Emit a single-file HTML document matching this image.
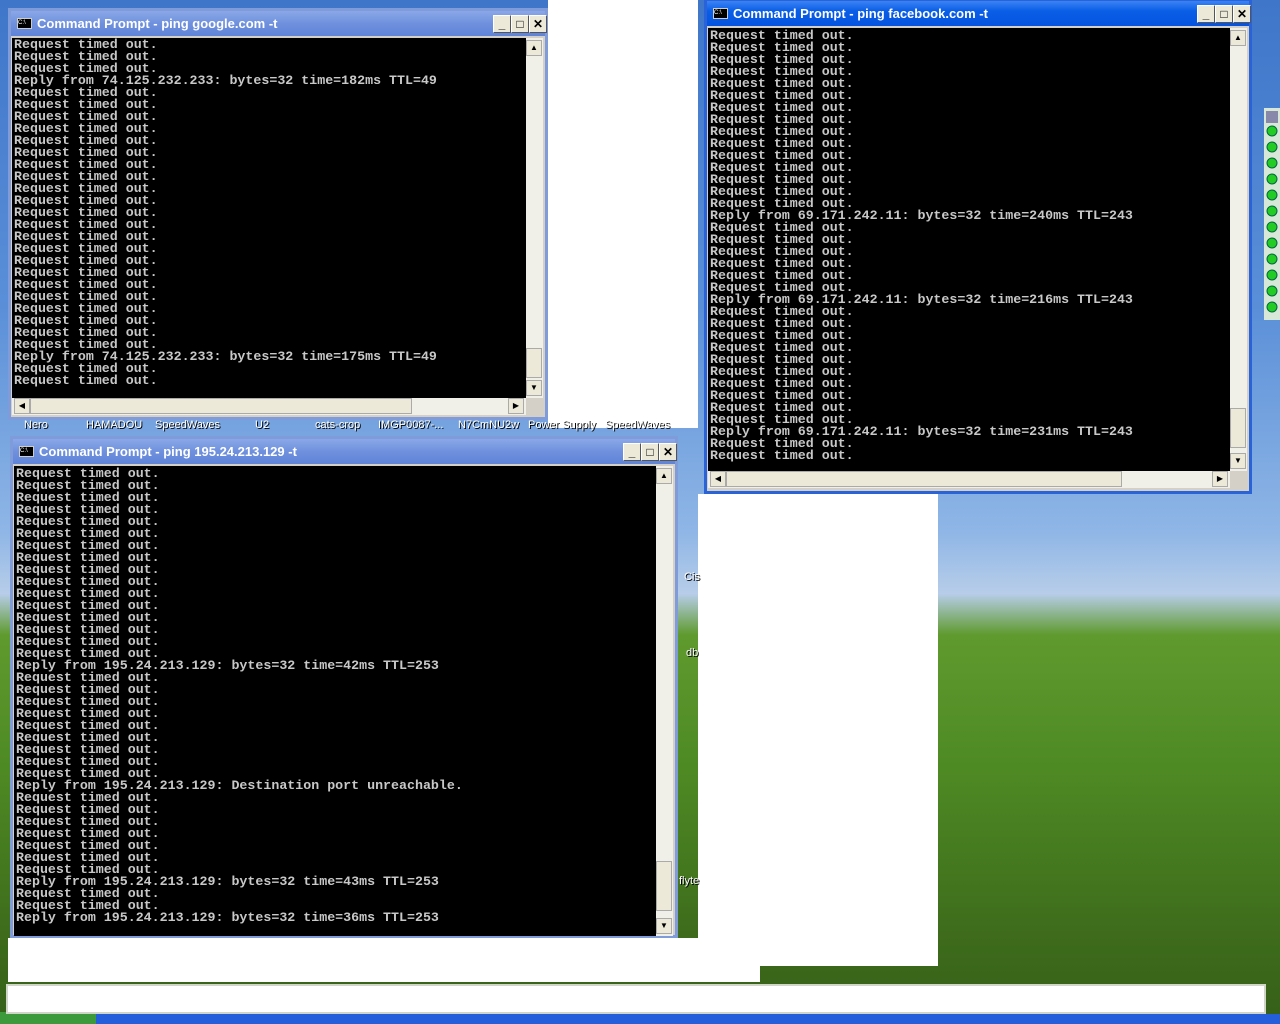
<!DOCTYPE html>
<html><head><meta charset="utf-8"><style>
*{margin:0;padding:0;box-sizing:border-box}
body{width:1280px;height:1024px;overflow:hidden;position:relative;font-family:"Liberation Sans",sans-serif;
background:linear-gradient(180deg,#3f76c9 0%,#5a8fd8 30%,#8fb6e6 52%,#b7cde9 58%,#5f9a2e 62%,#4e8a24 75%,#3f6e1c 90%,#355f18 100%)}
.abs{position:absolute}
.win{position:absolute;background:#d4d0c8;border:3px solid #7f9bd9}
.win.act{border-color:#2a63d8}
.tb{position:absolute;left:0;right:0;top:0;height:25px;background:linear-gradient(180deg,#8aa8e8,#6f90dd 50%,#5f84d8);color:#fff;font-size:13px;font-weight:bold;line-height:25px;padding-left:26px;white-space:nowrap}
.act .tb{background:linear-gradient(180deg,#3b83f5,#0a5ee6 40%,#0553e0)}
.ic{position:absolute;left:6px;top:7px;width:15px;height:11px;background:#000;border:1px solid #ccc;color:#fff;font-size:6px;line-height:9px;font-weight:normal}
.bt{position:absolute;top:4px;width:18px;height:18px;background:#ece9d8;border:1px solid #fff;border-right-color:#555;border-bottom-color:#555;color:#000;font-size:12px;line-height:16px;text-align:center}
.con{position:absolute;background:#000;overflow:hidden}
pre{font-family:"Liberation Mono",monospace;font-size:13.3px;line-height:12px;color:#c8c8c8;font-weight:bold;padding:0 0 0 2px;letter-spacing:0}
.vs{position:absolute;background:#f0efe8;width:17px}
.hs{position:absolute;background:#f0efe8;height:17px}
.ar{position:absolute;width:16px;height:16px;background:#ece9d8;border:1px solid #aaa;font-size:8px;text-align:center;line-height:14px}
.w{position:absolute;background:#fff}
.lbl{position:absolute;top:419px;font-size:11px;color:#fff;text-shadow:1px 1px #000}
</style></head><body>

<div class="w" style="left:548px;top:0;width:150px;height:428px"></div>
<div class="w" style="left:698px;top:494px;width:240px;height:472px"></div>
<div class="w" style="left:8px;top:938px;width:752px;height:44px"></div>
<div class="abs" style="left:0;top:1014px;width:1280px;height:10px;background:#245edb"></div>
<div class="abs" style="left:0;top:1012px;width:96px;height:12px;background:#3c9a3c"></div>
<div class="w" style="left:6px;top:984px;width:1260px;height:30px;border:2px solid #cfd6c8"></div>

<div class="lbl" style="left:24px">Nero</div>
<div class="lbl" style="left:86px">HAMADOU</div>
<div class="lbl" style="left:155px">SpeedWaves</div>
<div class="lbl" style="left:255px">U2</div>
<div class="lbl" style="left:315px">cats-crop</div>
<div class="lbl" style="left:378px">IMGP0087-...</div>
<div class="lbl" style="left:458px">N7CmNU2w</div>
<div class="lbl" style="left:528px">Power Supply</div>
<div class="lbl" style="left:605px">SpeedWaves</div>
<div class="lbl" style="left:684px;top:571px">Cis</div>
<div class="lbl" style="left:686px;top:647px">db</div>
<div class="lbl" style="left:679px;top:875px">flyte</div>

<div class="abs" style="left:1264px;top:108px;width:16px;height:212px;background:#d8e8d8">
<svg width="16" height="212"><g fill="#22cc22" stroke="#064">
<circle cx="8" cy="23" r="5"/><circle cx="8" cy="39" r="5"/><circle cx="8" cy="55" r="5"/><circle cx="8" cy="71" r="5"/><circle cx="8" cy="87" r="5"/><circle cx="8" cy="103" r="5"/><circle cx="8" cy="119" r="5"/><circle cx="8" cy="135" r="5"/><circle cx="8" cy="151" r="5"/><circle cx="8" cy="167" r="5"/><circle cx="8" cy="183" r="5"/><circle cx="8" cy="199" r="5"/></g>
<rect x="2" y="3" width="12" height="12" fill="#88a" /></svg></div>

<!-- Window 1 -->
<div class="win" style="left:8px;top:8px;width:540px;height:412px">
<div class="tb"><span class="ic">C:\</span>Command Prompt - ping google.com -t
<span class="bt" style="left:482px">_</span><span class="bt" style="left:500px">□</span><span class="bt" style="left:518px;font-weight:bold">✕</span></div>
<div class="con" style="left:1px;top:27px;width:514px;height:360px"><pre style="padding-top:1px">Request timed out.
Request timed out.
Request timed out.
Reply from 74.125.232.233: bytes=32 time=182ms TTL=49
Request timed out.
Request timed out.
Request timed out.
Request timed out.
Request timed out.
Request timed out.
Request timed out.
Request timed out.
Request timed out.
Request timed out.
Request timed out.
Request timed out.
Request timed out.
Request timed out.
Request timed out.
Request timed out.
Request timed out.
Request timed out.
Request timed out.
Request timed out.
Request timed out.
Request timed out.
Reply from 74.125.232.233: bytes=32 time=175ms TTL=49
Request timed out.
Request timed out.</pre></div>
<div class="vs" style="left:515px;top:27px;height:360px"><div class="ar" style="top:2px">▲</div><div class="ar" style="top:310px;height:30px"></div><div class="ar" style="bottom:2px">▼</div></div>
<div class="hs" style="left:1px;top:387px;width:514px"><div class="ar" style="left:2px">◀</div><div class="ar" style="left:18px;width:382px;background:#ece9d8"></div><div class="ar" style="right:2px">▶</div></div>
</div>

<!-- Window 2 -->
<div class="win act" style="left:704px;top:-2px;width:548px;height:496px">
<div class="tb"><span class="ic">C:\</span>Command Prompt - ping facebook.com -t
<span class="bt" style="left:490px">_</span><span class="bt" style="left:508px">□</span><span class="bt" style="left:526px;font-weight:bold">✕</span></div>
<div class="con" style="left:1px;top:27px;width:522px;height:443px"><pre style="padding-top:2px">Request timed out.
Request timed out.
Request timed out.
Request timed out.
Request timed out.
Request timed out.
Request timed out.
Request timed out.
Request timed out.
Request timed out.
Request timed out.
Request timed out.
Request timed out.
Request timed out.
Request timed out.
Reply from 69.171.242.11: bytes=32 time=240ms TTL=243
Request timed out.
Request timed out.
Request timed out.
Request timed out.
Request timed out.
Request timed out.
Reply from 69.171.242.11: bytes=32 time=216ms TTL=243
Request timed out.
Request timed out.
Request timed out.
Request timed out.
Request timed out.
Request timed out.
Request timed out.
Request timed out.
Request timed out.
Request timed out.
Reply from 69.171.242.11: bytes=32 time=231ms TTL=243
Request timed out.
Request timed out.</pre></div>
<div class="vs" style="left:523px;top:27px;height:443px"><div class="ar" style="top:2px">▲</div><div class="ar" style="top:380px;height:40px"></div><div class="ar" style="bottom:2px">▼</div></div>
<div class="hs" style="left:1px;top:470px;width:522px"><div class="ar" style="left:2px">◀</div><div class="ar" style="left:18px;width:396px;background:#ece9d8"></div><div class="ar" style="right:2px">▶</div></div>
</div>

<!-- Window 3 -->
<div class="win" style="left:10px;top:436px;width:668px;height:502px">
<div class="tb"><span class="ic">C:\</span>Command Prompt - ping 195.24.213.129 -t
<span class="bt" style="left:610px">_</span><span class="bt" style="left:628px">□</span><span class="bt" style="left:646px;font-weight:bold">✕</span></div>
<div class="con" style="left:1px;top:27px;width:642px;height:470px"><pre style="padding-top:2px">Request timed out.
Request timed out.
Request timed out.
Request timed out.
Request timed out.
Request timed out.
Request timed out.
Request timed out.
Request timed out.
Request timed out.
Request timed out.
Request timed out.
Request timed out.
Request timed out.
Request timed out.
Request timed out.
Reply from 195.24.213.129: bytes=32 time=42ms TTL=253
Request timed out.
Request timed out.
Request timed out.
Request timed out.
Request timed out.
Request timed out.
Request timed out.
Request timed out.
Request timed out.
Reply from 195.24.213.129: Destination port unreachable.
Request timed out.
Request timed out.
Request timed out.
Request timed out.
Request timed out.
Request timed out.
Request timed out.
Reply from 195.24.213.129: bytes=32 time=43ms TTL=253
Request timed out.
Request timed out.
Reply from 195.24.213.129: bytes=32 time=36ms TTL=253</pre></div>
<div class="vs" style="left:643px;top:27px;height:470px"><div class="ar" style="top:2px">▲</div><div class="ar" style="top:395px;height:50px"></div><div class="ar" style="bottom:2px">▼</div></div>
</div>

</body></html>
